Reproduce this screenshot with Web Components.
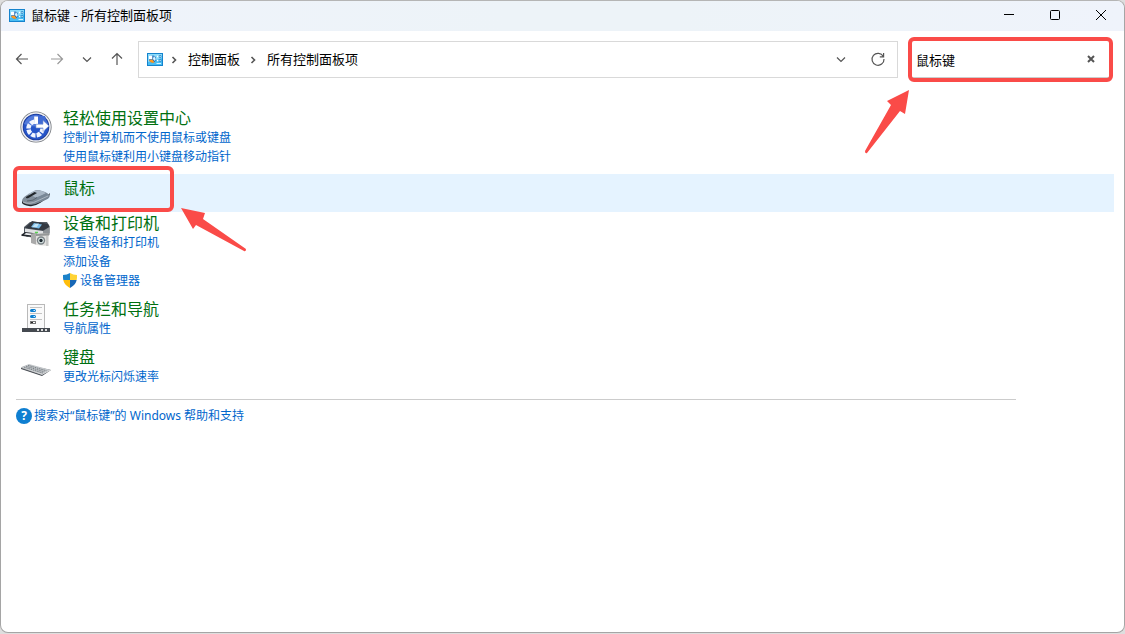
<!DOCTYPE html>
<html lang="zh-CN">
<head>
<meta charset="utf-8">
<title>鼠标键 - 所有控制面板项</title>
<style>
  html { background: #dedede; }
  body {
    margin: 0; min-height: 100vh; box-sizing: border-box; padding-bottom: 1px;
    display: flex; color: #000;
    font: 13px/20px "Open Sans", "Noto Sans CJK SC", sans-serif;
  }
</style>
</head>
<body>
<cp-window>
  <title-bar slot="title">鼠标键 - 所有控制面板项</title-bar>
  <nav-bar slot="toolbar" query="鼠标键"></nav-bar>
  <result-item icon="ease" heading="轻松使用设置中心">
    <task-link>控制计算机而不使用鼠标或键盘</task-link>
    <task-link>使用鼠标键利用小键盘移动指针</task-link>
  </result-item>
  <result-item icon="mouse" heading="鼠标" selected>
    <call-out slot="mark" kind="row"></call-out>
  </result-item>
  <result-item icon="printer" heading="设备和打印机">
    <task-link>查看设备和打印机</task-link>
    <task-link>添加设备</task-link>
    <task-link icon="shield">设备管理器</task-link>
  </result-item>
  <result-item icon="taskbar" heading="任务栏和导航">
    <task-link>导航属性</task-link>
  </result-item>
  <result-item icon="keyboard" heading="键盘">
    <task-link>更改光标闪烁速率</task-link>
  </result-item>
  <help-link slot="footer">搜索对“鼠标键”的 Windows 帮助和支持</help-link>
</cp-window>

<script>
const ICONS = {
  panel: [16, 16, `<rect x="0" y="1" width="16" height="13" fill="#1583cd"/><rect x="1" y="2" width="14" height="11" fill="#48bdf3"/><path d="M1 2h14v4L1 10z" fill="#8bdcfb"/><circle cx="5.500" cy="7" r="3.400" fill="#1565b5"/><path d="M5.300 7.200V3.600L2 4v3.200z" fill="#fff"/><path d="M2.200 8l3.300-.5 2 2.700A3.400 3.400 0 0 1 2.200 8z" fill="#ff9a1f"/><path d="M7 3.800L5.800 7l2 2 1-2z" fill="#d9f3ff"/><path d="M10 4.500h1.500M10 8.500h1.500" stroke="#fff" stroke-width="1.500"/><path d="M12.200 3.500h1.800v2h-1.800zM12.200 7.500h1.800v2h-1.800z" fill="#e3f7ff" stroke="#1b7dc4" stroke-width=".7"/><path d="M9.500 11.500h4.500" stroke="#d6f2ff"/>`],
  ease: [32, 32, `<circle cx="16" cy="16" r="15.600" fill="#73777d"/><circle cx="16" cy="16" r="14.800" fill="#f0f1f4"/><circle cx="16" cy="16" r="13.300" fill="#203b96"/><circle cx="16" cy="16" r="12.500" fill="#2554c8"/><path d="M4 13a12.500 12.500 0 0 1 24 0q-12 5-24 0z" fill="#527ada"/><circle cx="15.500" cy="17.500" r="7" fill="none" stroke="#f1f5ff" stroke-width="4.500" stroke-dasharray="4.300 1.200" pathLength="44"/><path d="M16 16V5h9l2 8z" fill="#416bd3"/><path d="M14.200 5.500h3.800V13h-3.800z" fill="#fff"/><path d="M16 13.200h7V9.500l6 5.500-6 5.500v-3.600h-7z" fill="#fff" stroke="#7892d1" stroke-width=".6"/>`],
  mouse: [32, 32, `<path d="M2 20v2q1 2 7 3 5 1 11-3l9-6 1-4-10 9z" fill="#22272d"/><path d="M2 20q0-3 5-6l7-4q3-2 8 0 7 2 7.500 5 .5 2-4 4l-10 4q-7 2-12-1z" fill="#808c99"/><path d="M14 10q6-2 12 2l-9 5-9-4z" fill="#a9b7c5"/><path d="M16 16.500l10-4q4 2 2 5l-10 4-7 2q4-3 5-7z" fill="#788796"/><path d="M6 16l8.500-5 2.500 1-8.500 5q-3 1-2.500-1z" fill="#20252a"/><path d="M3 21q7 3 14-1l11-5" fill="none" stroke="#c2c9d0" stroke-width=".7"/><path d="M7 20q7 0 10-3.500" fill="none" stroke="#4e5963" stroke-width=".8"/>`],
  printer: [32, 32, `<path d="M10 6h17l2.500 4v7l-3 4H7l-3-3v-7z" fill="#535a62"/><path d="M12 5l16 3 1.500 3L23 14.500 5 12z" fill="#343a42"/><path d="M14 7l8 1.500-3 4-8-1.500z" fill="#79bce9"/><path d="M15 8l4-.5-2 3.500-5 .2z" fill="#c2e4f7"/><path d="M5 12.500l18 2.500v5L5 17z" fill="#dfe1e3"/><path d="M23 15l6.500-4v8L23 22z" fill="#8e9397"/><path d="M5 17l14 2v4L4 20z" fill="#777d82"/><path d="M1 19l4-3 12 1.500-2 3.500-13-1z" fill="#23272d"/><path d="M4 18.500l2-1.500 9 1-1 1.700z" fill="#f0f2f5"/><path d="M11 18l6-2v13l-6-2z" fill="#aaa"/><path d="M16 18l13-1v13l-13-1z" fill="#e1e1df"/><path d="M16 18l13-1v2.500l-13 .5z" fill="#949797"/><circle cx="21" cy="24.500" r="4.200" fill="#7c8488"/><circle cx="21" cy="24.500" r="2.800" fill="#d9e6e5"/><circle cx="21" cy="24.500" r="1.700" fill="#202c32"/><path d="M27 19v11" stroke="#aeb0af"/><path d="M15 16.500h3" stroke="#5ad254" stroke-width="1.500"/>`],
  taskbar: [32, 32, `<rect x="7.500" y="2.500" width="17" height="24" fill="#fafafa" stroke="#b9b9b9"/><path d="M10 5.500h12M10 11.500h12M10 17.500h12" stroke="#c4c4c4"/><rect x="10" y="7" width="6" height="3" rx="1.500" fill="#0c7fd0"/><rect x="10" y="13" width="6" height="3" rx="1.500" fill="#0c7fd0"/><path d="M13.500 8h1.500v1h-1.500zM13.500 14h1.500v1h-1.500z" fill="#c7eaff"/><rect x="10.500" y="19.500" width="5" height="2" fill="#fff" stroke="#777"/><path d="M11 20h2v1h-2z" fill="#222"/><rect x="2" y="26" width="28" height="4" fill="#454a50"/><path d="M17 27h2v2h-2zM21 27h2v2h-2zM25 27h2v2h-2z" fill="#ddd"/>`],
  keyboard: [32, 32, `<path d="M1 17.500l7-2.500 23 5-9 6L1 19z" fill="#454a51"/><path d="M1 17.300L9 14l22 6-9 4.700z" fill="#c3c7ca"/><path d="M4 17.100l19 6M6 16.200l18.500 5.700M8 15.300l18.500 5.500" stroke="#6c7278" stroke-width=".8" stroke-dasharray="1.600 .7"/><path d="M1 17.500L22 24.500l9-4.800" fill="none" stroke="#eee" stroke-width=".6"/>`],
  shield: [14, 15, `<clipPath id="s"><path d="M7 0q3 2 7 2c.4 6-1.500 10-7 13C1.500 12-.4 8 0 2q4 0 7-2z"/></clipPath><g clip-path="url(#s)"><path d="M0 0h7v7H0z" fill="#1c82c9"/><path d="M7 0h7v7H7z" fill="#ffd334"/><path d="M0 7h7v8H0z" fill="#ffbd0b"/><path d="M7 7h7v8H7z" fill="#1767b6"/></g>`],
  back: [16, 16, `<path d="M14 8H2.500M7.500 3L2.500 8l5 5" class="l"/>`],
  forward: [16, 16, `<path d="M2 8h11.500M8.500 3l5 5-5 5" class="l"/>`],
  down: [10, 10, `<path d="M1 3.500l4 4 4-4" class="l"/>`],
  up: [16, 16, `<path d="M8 14V2.500M3 7.500l5-5 5 5" class="l"/>`],
  sep: [6, 10, `<path d="M1.500 2l3 3-3 3" class="l"/>`],
  refresh: [14, 14, `<path d="M12.300 4.500A6 6 0 1 0 13 7M12.600 1v3.800H8.800" class="l"/>`],
  clear: [8, 8, `<path d="M1 1l6 6M7 1L1 7" class="l"/>`],
  min: [10, 10, `<path d="M0 4.500h10" class="l"/>`],
  max: [10, 10, `<rect x=".5" y=".5" width="9" height="9" rx="1" class="l"/>`],
  close: [10, 10, `<path d="M0 0l10 10M10 0L0 10" class="l"/>`],
  arrowUp: [46, 64, `<path d="M45 0L23 11l4 4L1 61q0 3 2 2l33-42 5 3z" fill="#fa4b48"/>`],
  arrowLeft: [66, 44, `<path d="M0 0l24 5-2 6 43 30q0 3-2 2L15 17l-3 4z" fill="#fa4b48"/>`]
};

function define(name, html, setup) {
  const template = document.createElement('template');
  template.innerHTML = html;
  customElements.define(name, class extends HTMLElement {
    constructor() {
      super();
      this.attachShadow({ mode: 'open' }).append(template.content.cloneNode(true));
    }
    connectedCallback() { if (setup) setup(this, this.shadowRoot); }
  });
}

define('cp-icon', `<style>
  :host { display: inline-block; flex: none; line-height: 0; }
  svg { display: block; overflow: visible; }
  .l { fill: none; stroke: currentColor; stroke-width: var(--stroke, 1); }
</style><span></span>`, (el, root) => {
  const icon = ICONS[el.getAttribute('name')];
  if (!icon) return;
  const [w, h, art] = icon;
  root.querySelector('span').innerHTML =
    `<svg width="${w}" height="${h}" viewBox="0 0 ${w} ${h}" aria-hidden="true">${art}</svg>`;
});

define('call-out', `<style>
  :host { display: block; position: absolute; box-sizing: border-box; pointer-events: none;
    border: 4px solid #fa4b48; border-radius: 6px; z-index: 2; }
  :host([kind=row]) { left: -3px; top: -8px; width: 161px; height: 46px; }
  :host([kind=search]) { inset: -4px -4px -5px -4px; }
  cp-icon { position: absolute; display: none; }
  :host([kind=row]) .left, :host([kind=search]) .up { display: block; }
  .left { left: 164px; top: 38px; }
  .up { right: 199px; top: 49px; }
</style><cp-icon class="left" name="arrowLeft"></cp-icon><cp-icon class="up" name="arrowUp"></cp-icon>`);

define('title-bar', `<style>
  :host { display: flex; align-items: center; height: 30px; padding-left: 8px;
    background: linear-gradient(90deg, #eff3fb, #edf3f8 45%, #edf3f8 60%, #eff3fb); }
  .name { flex: 1; margin-left: 6px; padding-bottom: 2px; }
  button { width: 46px; height: 28px; padding: 0; border: 0; background: none; color: #000;
    display: flex; align-items: center; justify-content: center; }
  .buttons { display: flex; align-self: flex-start; }
</style>
<cp-icon name="panel"></cp-icon><span class="name"><slot></slot></span>
<div class="buttons">
<button aria-label="最小化"><cp-icon name="min"></cp-icon></button>
<button aria-label="最大化"><cp-icon name="max"></cp-icon></button>
<button aria-label="关闭"><cp-icon name="close"></cp-icon></button>
</div>`);

define('nav-bar', `<style>
  :host { display: flex; align-items: center; padding: 10px 15px 0 6px; color: #555; }
  button { padding: 0; border: 0; background: none; color: inherit; height: 28px; width: 30px;
    display: flex; align-items: center; justify-content: center; --stroke: 1.2; }
  nav { display: flex; gap: 5px; margin-right: 6px; padding-bottom: 2px; }
  .small { width: 20px; }
  button:disabled { color: #999; }
  .address { flex: 1; min-width: 0; box-sizing: border-box; height: 37px; border: 1px solid #d9d9d9;
    display: flex; align-items: center; padding: 0 4px 0 8px; }
  .address a { color: #000; text-decoration: none; white-space: nowrap; padding-bottom: 2px; }
  .sep { margin: 0 11px 0 10px; --stroke: 1.6; }
  .sep.first { margin-left: 8px; }
  .tools { margin-left: auto; display: flex; gap: 10px; padding-bottom: 2px; }
  .tools .small { width: 24px; }
  .search { position: relative; width: 197px; height: 37px; margin-left: 14px; box-sizing: border-box;
    display: flex; align-items: center; border-bottom: 1px solid #ccc; }
  input { flex: 1; min-width: 0; border: 0; padding: 0 4px; outline: 0; background: none;
    font: inherit; color: #000; height: 36px; }
  .search button { width: 36px; --stroke: 2; }
</style>
<nav>
  <button aria-label="返回"><cp-icon name="back"></cp-icon></button>
  <button aria-label="前进" disabled><cp-icon name="forward"></cp-icon></button>
  <button class="small" aria-label="最近位置"><cp-icon name="down"></cp-icon></button>
  <button aria-label="向上"><cp-icon name="up"></cp-icon></button>
</nav>
<div class="address">
  <cp-icon name="panel"></cp-icon>
  <cp-icon class="sep first" name="sep"></cp-icon><a href="#">控制面板</a>
  <cp-icon class="sep" name="sep"></cp-icon><a href="#">所有控制面板项</a>
  <div class="tools">
    <button class="small" aria-label="历史记录"><cp-icon name="down"></cp-icon></button>
    <button aria-label="刷新"><cp-icon name="refresh"></cp-icon></button>
  </div>
</div>
<div class="search">
  <input type="text" aria-label="搜索">
  <button aria-label="清除"><cp-icon name="clear"></cp-icon></button>
  <call-out kind="search"></call-out>
</div>`, (el, root) => { root.querySelector('input').setAttribute('value', el.getAttribute('query')); });

define('task-link', `<style>
  :host { display: flex; height: 19px; font-size: 12px; line-height: 19px; }
  a { display: flex; align-items: center; gap: 3px; color: #0066cc; text-decoration: none; white-space: nowrap; }
</style><a href="#"><slot></slot></a>`, (el, root) => {
  if (el.hasAttribute('icon')) {
    const icon = document.createElement('cp-icon');
    icon.setAttribute('name', el.getAttribute('icon'));
    root.querySelector('a').prepend(icon);
  }
});

define('result-item', `<style>
  :host { display: flex; gap: 11px; position: relative; padding: 5px 4px; }
  :host([selected]) { box-sizing: border-box; height: 38px; margin: 3px 0 -3px; background: #e5f3ff; z-index: 1; }
  cp-icon { margin-top: 2px; }
  h2 { margin: 0; font-size: 16px; line-height: 19px; font-weight: 400; }
  h2 a { color: #007010; text-decoration: none; }
</style><div><h2><a href="#"></a></h2><slot></slot></div><slot name="mark"></slot>`,
(el, root) => {
  root.querySelector('h2 a').textContent = el.getAttribute('heading');
  const icon = document.createElement('cp-icon');
  icon.setAttribute('name', el.getAttribute('icon'));
  root.querySelector('div').before(icon);
});

define('help-link', `<style>
  :host { display: block; max-width: 1000px; margin-top: 8px; padding-top: 8px; border-top: 1px solid #ccc;
    font-family: "Noto Sans", "Noto Sans CJK SC", sans-serif; font-size: 12px; line-height: 16px; }
  a { display: flex; align-items: center; gap: 2px; color: #0066cc; text-decoration: none; }
  i { width: 16px; height: 16px; border-radius: 50%; background: #0f7fd1; color: #fff;
    font-style: normal; font-weight: 700; text-align: center; }
</style><a href="#"><i>?</i><span><slot></slot></span></a>`);

define('cp-window', `<style>
  :host { flex: 1; min-width: 0; display: flex; flex-direction: column; box-sizing: border-box;
    border: 1px solid #a5a5a5; border-top-color: #b5b5b5; border-radius: 8px; background: #fff; overflow: hidden; }
  main { padding: 26px 10px 0 15px; }
</style>
<slot name="title"></slot><slot name="toolbar"></slot>
<main><slot></slot><slot name="footer"></slot></main>`);
</script>
</body>
</html>
